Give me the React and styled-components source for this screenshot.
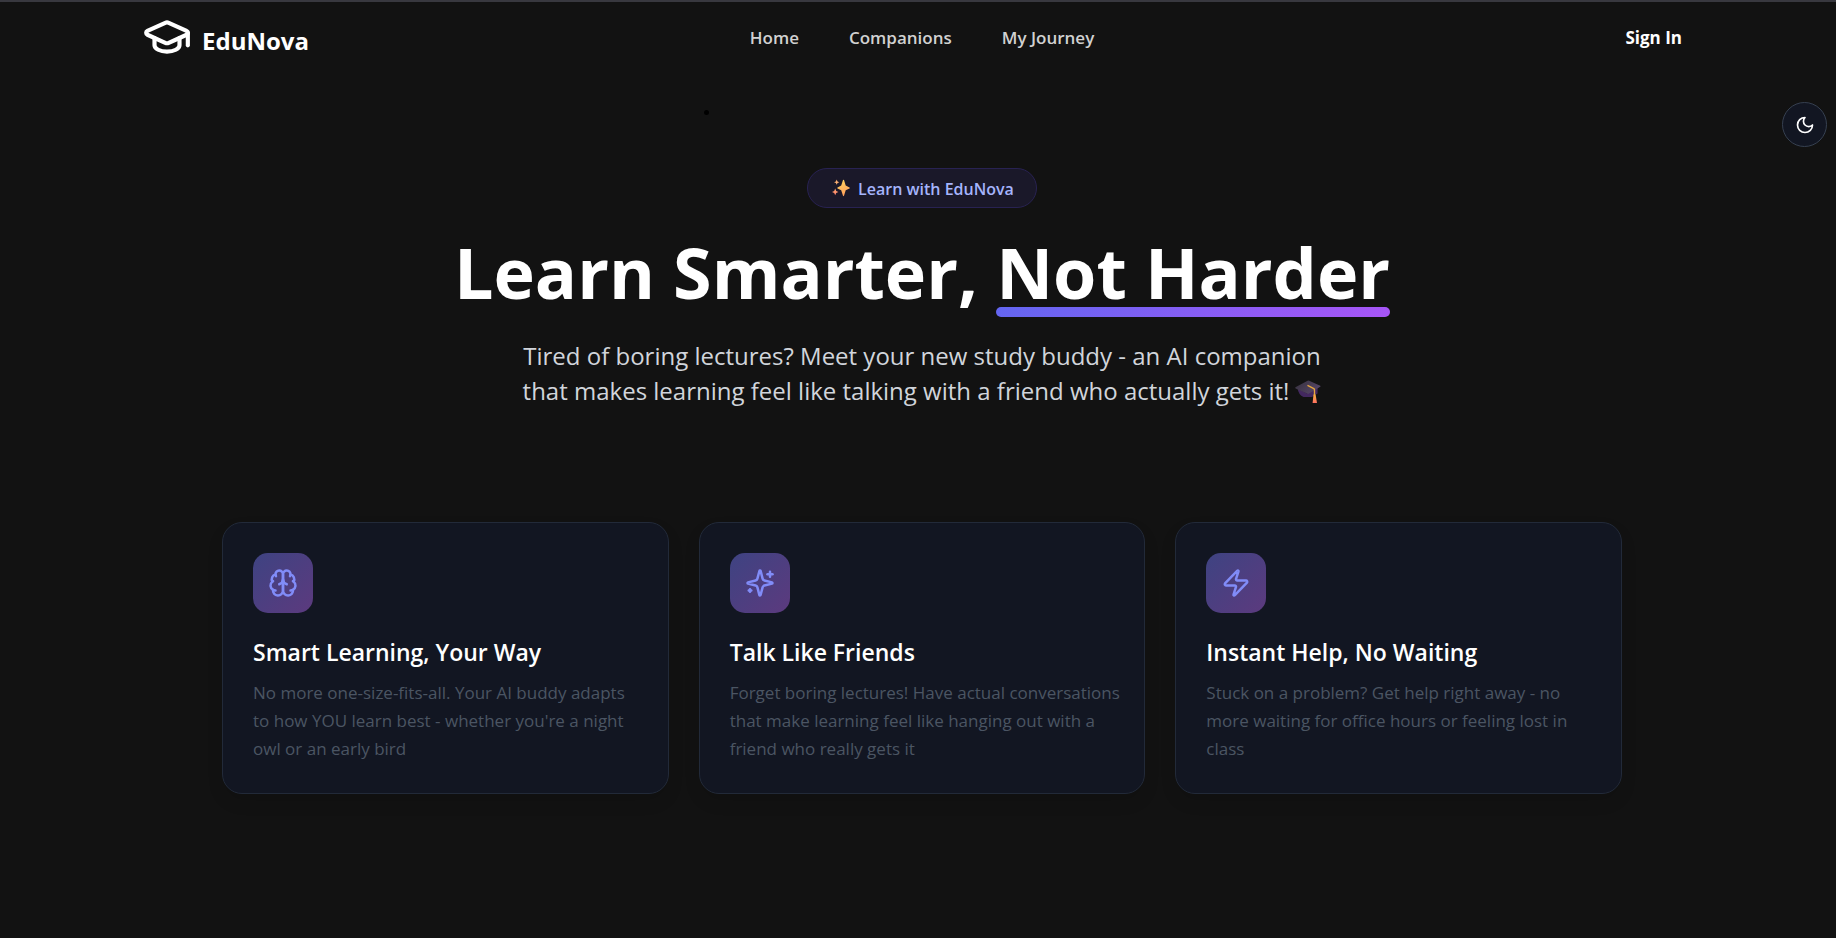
import React from 'react';
import styled, { createGlobalStyle } from 'styled-components';
import { GraduationCap, Zap } from 'lucide-react';

const GlobalStyle = createGlobalStyle`
  *, *::before, *::after { box-sizing: border-box; }
  body {
    margin: 0;
    min-height: 100vh;
    background: #121212;
    color: #fff;
    font-family: 'Open Sans', 'Noto Sans', sans-serif;
  }
  h1, h2, p, ul { margin: 0; padding: 0; }
  ul { list-style: none; }
`;

const Page = styled.div`
  min-height: 100vh;
  border-top: 2px solid #38383f;
`;

const Header = styled.header`
  display: grid;
  grid-template-columns: 1fr auto 1fr;
  align-items: center;
  padding: 10px 154px 10px 142px;
`;

const Brand = styled.a`
  display: flex;
  align-items: center;
  gap: 10px;
  justify-self: start;
  color: #fff;
  text-decoration: none;
`;

const BrandName = styled.span`
  padding-top: 8px;
  font-size: 24px;
  font-weight: 700;
  line-height: 32px;
`;

const NavList = styled.ul`
  display: flex;
  gap: 50px;
  padding: 2px 0 0 20px;
`;

const NavLink = styled.a`
  color: #d1d1d1;
  font-size: 17px;
  font-weight: 600;
  line-height: 24px;
  text-decoration: none;
`;

const SignInButton = styled.button`
  justify-self: end;
  padding: 2px 0 0;
  border: 0;
  background: none;
  color: #fff;
  font: 700 17px/24px 'Open Sans', 'Noto Sans', sans-serif;
  cursor: pointer;
`;

const Notices = styled.ul`
  width: 428px;
  max-width: 100%;
  margin: 38px auto 54px;
`;

const Notice = styled.li`
  height: 4px;

  &::before {
    content: '';
    display: block;
    width: 5px;
    height: 5px;
    border-radius: 50%;
    background: #000;
  }
`;

const ThemeToggle = styled.button`
  position: fixed;
  top: 102px;
  right: 9px;
  display: grid;
  place-items: center;
  width: 45px;
  height: 45px;
  padding: 0;
  border: 1px solid #374151;
  border-radius: 50%;
  background: #121622;
  color: #fff;
  cursor: pointer;
`;

const Main = styled.main`
  display: flex;
  flex-direction: column;
  align-items: center;
  padding-left: 8px;
`;

const Badge = styled.p`
  display: flex;
  align-items: center;
  gap: 8px;
  padding: 7px 22px 7px 24px;
  border: 1px solid #282252;
  border-radius: 20px;
  background: #1a1829;
  color: #a5b4fc;
  font-size: 16px;
  font-weight: 600;
  line-height: 24px;
`;

const BadgeText = styled.span`
  padding-top: 2px;
  line-height: 22px;
`;

const Title = styled.h1`
  margin-top: 24px;
  font-size: 70px;
  font-weight: 700;
  line-height: 80px;
  text-align: center;
`;

const Underlined = styled.span`
  position: relative;
  display: inline-block;

  &::after {
    content: '';
    position: absolute;
    right: 0;
    bottom: -5px;
    left: 0;
    height: 10px;
    border-radius: 5px;
    background: linear-gradient(135deg, #6366f1, #a855f7);
  }
`;

const Lead = styled.p`
  max-width: 820px;
  margin-top: 26px;
  color: #d1d5db;
  font-size: 24px;
  line-height: 35px;
  text-align: center;

  svg { margin-left: 6px; vertical-align: -4px; }
`;

const Features = styled.section`
  display: grid;
  grid-template-columns: repeat(3, 1fr);
  gap: 30px;
  width: 100%;
  max-width: 1400px;
  margin-top: 114px;
`;

const Card = styled.article`
  padding: 30px;
  border: 1px solid #222a39;
  border-radius: 20px;
  background: #121622;
  box-shadow: 0 8px 16px rgba(0, 0, 0, 0.1);
`;

const CardIcon = styled.div`
  display: grid;
  place-items: center;
  width: 60px;
  height: 60px;
  border-radius: 15px;
  background: linear-gradient(135deg, #3e4382, #5c3a7e);
  color: #818cf8;
`;

const CardTitle = styled.h2`
  margin-top: 23px;
  font-size: 23px;
  font-weight: 600;
  line-height: 32px;
`;

const CardText = styled.p`
  margin: 11px -10px 0 0;
  color: #4b5563;
  font-size: 17px;
  line-height: 28px;
  white-space: pre-line;
`;

const StrokeIcon = ({ size, paths }) => (
  <svg
    width={size}
    height={size}
    viewBox="0 0 24 24"
    fill="none"
    stroke="currentColor"
    strokeWidth="2"
    strokeLinecap="round"
    strokeLinejoin="round"
    aria-hidden="true"
  >
    {paths.map((d) => (
      <path key={d} d={d} />
    ))}
  </svg>
);

const Brain = ({ size }) => (
  <StrokeIcon
    size={size}
    paths={[
      'M12 5a3 3 0 1 0-5.997.125 4 4 0 0 0-2.526 5.77 4 4 0 0 0 .556 6.588A4 4 0 1 0 12 18Z',
      'M12 5a3 3 0 1 1 5.997.125 4 4 0 0 1 2.526 5.77 4 4 0 0 1-.556 6.588A4 4 0 1 1 12 18Z',
      'M15 13a4.5 4.5 0 0 1-3-4 4.5 4.5 0 0 1-3 4',
      'M17.599 6.5a3 3 0 0 0 .399-1.375',
      'M6.003 5.125A3 3 0 0 0 6.401 6.5',
      'M3.477 10.896a4 4 0 0 1 .585-.396',
      'M19.938 10.5a4 4 0 0 1 .585.396',
      'M6 18a4 4 0 0 1-1.967-.516',
      'M19.967 17.484A4 4 0 0 1 18 18',
    ]}
  />
);

const Sparkles = ({ size }) => (
  <StrokeIcon
    size={size}
    paths={[
      'M9.937 15.5A2 2 0 0 0 8.5 14.063l-6.135-1.582a.5.5 0 0 1 0-.962L8.5 9.936A2 2 0 0 0 9.937 8.5l1.582-6.135a.5.5 0 0 1 .963 0L14.063 8.5A2 2 0 0 0 15.5 9.937l6.135 1.581a.5.5 0 0 1 0 .964L15.5 14.063a2 2 0 0 0-1.437 1.437l-1.582 6.135a.5.5 0 0 1-.963 0z',
      'M20 3v4',
      'M22 5h-4',
      'M4 17v2',
      'M5 18H3',
    ]}
  />
);

const Moon = ({ size }) => (
  <StrokeIcon size={size} paths={['M12 3a6 6 0 0 0 9 9 9 9 0 1 1-9-9Z']} />
);

const SparkleEmoji = () => (
  <svg width="18" height="18" viewBox="0 0 18 18" role="img" aria-label="sparkles">
    <defs>
      <linearGradient id="spark" x1="0.3" y1="0" x2="0.6" y2="1">
        <stop offset="0" stopColor="#ffd45e" />
        <stop offset="1" stopColor="#ff9c5c" />
      </linearGradient>
      <linearGradient id="sparkSmall" x1="0" y1="0" x2="0" y2="1">
        <stop offset="0" stopColor="#ffab6b" />
        <stop offset="1" stopColor="#ff7d6e" />
      </linearGradient>
    </defs>
    <path d="M11 1Q11.5 0.4 12 1L13.7 6.6L17.5 8.4Q18.3 9 17.5 9.6L13.7 11.2L12 16.8Q11.5 17.5 11 16.8L9.2 11.2L5.6 9.6Q4.8 9 5.6 8.4L9.2 6.6Z" fill="url(#spark)" />
    <path d="M4.7 0.6L5.5 2.4L7.3 3.2L5.5 4L4.7 5.8L3.9 4L2.1 3.2L3.9 2.4Z" fill="#ffb173" />
    <path d="M3.2 9.5L4.2 11.9L6.4 12.9L4.2 13.9L3.2 16.3L2.2 13.9L0 12.9L2.2 11.9Z" fill="url(#sparkSmall)" />
  </svg>
);

const CapEmoji = () => (
  <svg width="26" height="24" viewBox="0 0 26 24" role="img" aria-label="graduation cap">
    <defs>
      <linearGradient id="capTop" x1="0" y1="0" x2="1" y2="0.6">
        <stop offset="0" stopColor="#35313c" />
        <stop offset="1" stopColor="#574668" />
      </linearGradient>
      <linearGradient id="tassel" x1="0" y1="0" x2="0" y2="1">
        <stop offset="0" stopColor="#f6b23e" />
        <stop offset="1" stopColor="#ff6f61" />
      </linearGradient>
    </defs>
    <path d="M2.6 8.5L12 13.5L22.6 7.5V13.5L17 17H8.5Q3.5 15 2.6 8.5Z" fill="#43285f" />
    <path d="M0.4 7.3L12.6 0.8Q13.4 0.4 14.2 0.8L25.2 5.8Q26 6.3 25.2 6.8L14 13.6Q13 14.1 12 13.6L0.6 8.4Q0 7.9 0.4 7.3Z" fill="url(#capTop)" />
    <path d="M13 5.6L18.8 8.6Q19.5 9 19.5 10V15" fill="none" stroke="#e5a63f" strokeWidth="1.4" strokeLinecap="round" />
    <path d="M18.5 14.5H20.6L22 23H17.6Z" fill="url(#tassel)" />
  </svg>
);

const links = ['Home', 'Companions', 'My Journey'];

const features = [
  {
    Icon: Brain,
    title: 'Smart Learning, Your Way',
    text: "No more one-size-fits-all. Your AI buddy adapts\nto how YOU learn best - whether you're a night\nowl or an early bird",
  },
  {
    Icon: Sparkles,
    title: 'Talk Like Friends',
    text: 'Forget boring lectures! Have actual conversations\nthat make learning feel like hanging out with a\nfriend who really gets it',
  },
  {
    Icon: Zap,
    title: 'Instant Help, No Waiting',
    text: 'Stuck on a problem? Get help right away - no\nmore waiting for office hours or feeling lost in\nclass',
  },
];

export default function App() {
  return (
    <Page>
      <GlobalStyle />
      <Header>
        <Brand href="#">
          <GraduationCap size={50} />
          <BrandName>EduNova</BrandName>
        </Brand>
        <nav>
          <NavList>
            {links.map((label) => (
              <li key={label}>
                <NavLink href="#">{label}</NavLink>
              </li>
            ))}
          </NavList>
        </nav>
        <SignInButton type="button">Sign In</SignInButton>
      </Header>
      <Notices>
        <Notice />
      </Notices>
      <ThemeToggle type="button" aria-label="Switch theme">
        <Moon size={20} />
      </ThemeToggle>
      <Main>
        <Badge>
          <SparkleEmoji />
          <BadgeText>Learn with EduNova</BadgeText>
        </Badge>
        <Title>
          Learn Smarter, <Underlined>Not Harder</Underlined>
        </Title>
        <Lead>
          Tired of boring lectures? Meet your new study buddy - an AI companion
          that makes learning feel like talking with a friend who actually gets it!
          <CapEmoji />
        </Lead>
        <Features>
          {features.map(({ Icon, title, text }) => (
            <Card key={title}>
              <CardIcon>
                <Icon size={30} />
              </CardIcon>
              <CardTitle>{title}</CardTitle>
              <CardText>{text}</CardText>
            </Card>
          ))}
        </Features>
      </Main>
    </Page>
  );
}
